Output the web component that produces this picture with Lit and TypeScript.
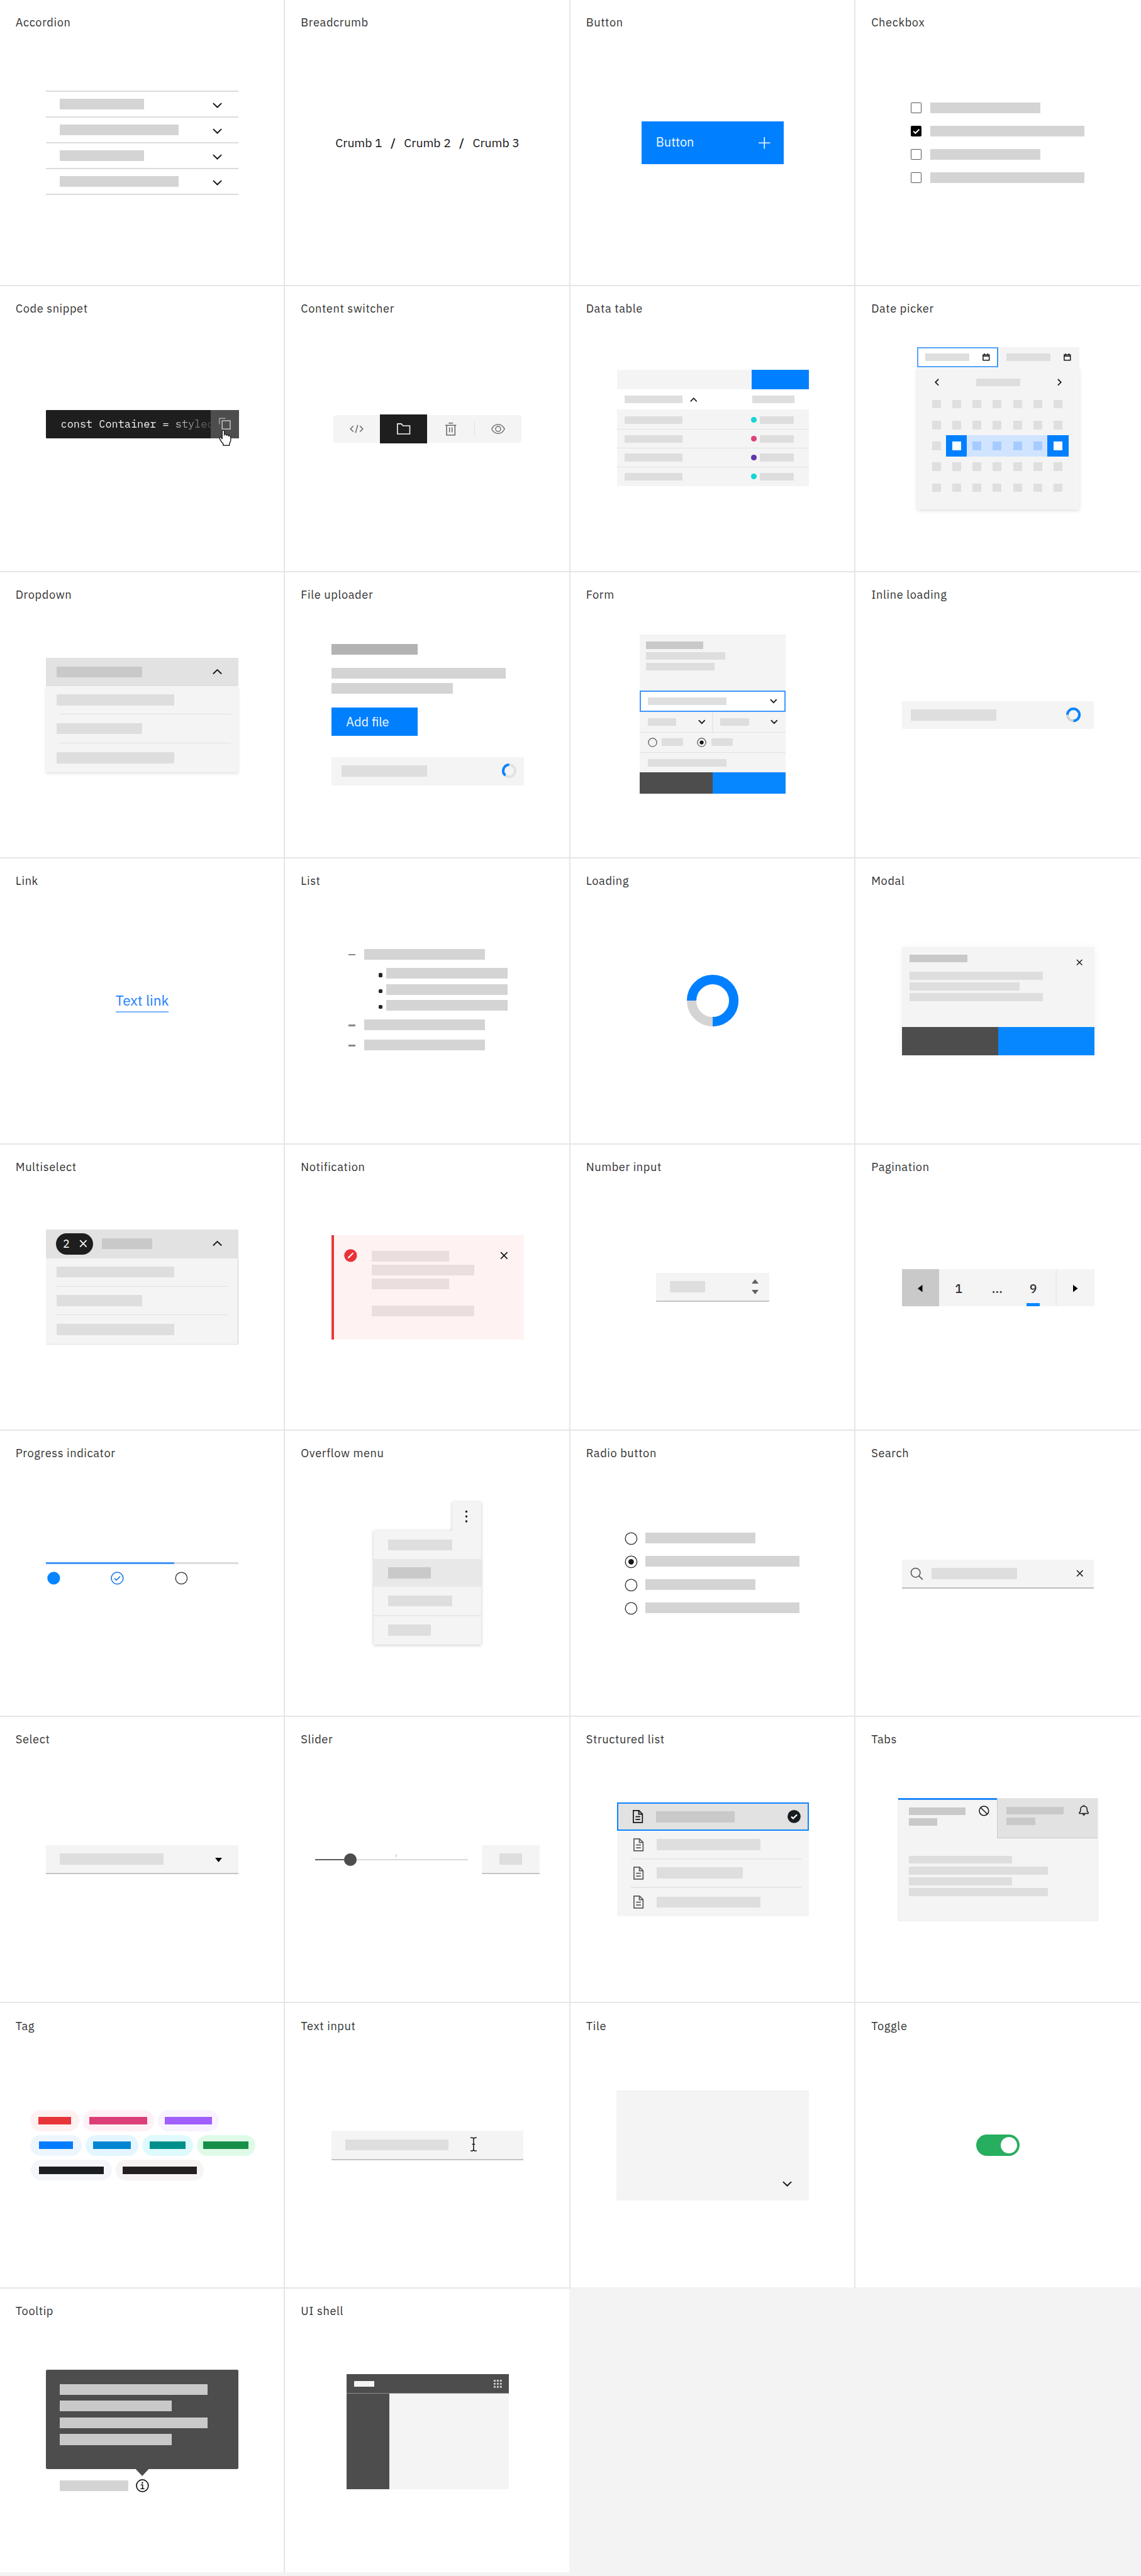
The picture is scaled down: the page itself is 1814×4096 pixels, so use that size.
import { LitElement, html, css, svg, nothing, TemplateResult } from "lit";
import { customElement, property } from "lit/decorators.js";

type View = TemplateResult;

const bar = (w: number, kind = "") => html`<span class="bar ${kind}" style="width:${w}px"></span>`;

/* Icons: [width, height, drawing] */
const ICONS: Record<string, [number, number, unknown]> = {
  down: [26, 15, svg`<path d="M1.5 2 13 13 24.5 2" fill="none" stroke="currentColor" stroke-width="3.4"/>`],
  up: [26, 15, svg`<path d="M1.5 13 13 2 24.5 13" fill="none" stroke="currentColor" stroke-width="3.4"/>`],
  downSmall: [20, 13, svg`<path d="M1.5 2 10 10.5 18.5 2" fill="none" stroke="currentColor" stroke-width="3.2"/>`],
  upSmall: [20, 12, svg`<path d="M1.5 11 10 2 18.5 11" fill="none" stroke="currentColor" stroke-width="2.8"/>`],
  left: [12, 20, svg`<path d="M10.5 1.5 2 10l8.500 8.500" fill="none" stroke="currentColor" stroke-width="3"/>`],
  right: [12, 20, svg`<path d="M1.500 1.500 10 10l-8.500 8.500" fill="none" stroke="currentColor" stroke-width="3"/>`],
  plus: [32, 32, svg`<path d="M16 0v32M0 16h32" fill="none" stroke="currentColor" stroke-width="2.8"/>`],
  close: [22, 22, svg`<path d="M2 2l18 18M20 2 2 20" fill="none" stroke="currentColor" stroke-width="3"/>`],
  check: [20, 16, svg`<path d="M2 8l5.500 5.500L18 3" fill="none" stroke="currentColor" stroke-width="3.600"/>`],
  copy: [32, 34, svg`<path d="M9 8.500h22v23H9z" fill="none" stroke="#c6c6c6" stroke-width="2.600"/><path d="M1.500 18V2H18" fill="none" stroke="#a4a4a4" stroke-width="2.600"/>`],
  hand: [36, 46, svg`<path transform="scale(2.620)" d="M3.400 10V1.700c0-1.500 2.300-1.500 2.300 0v3.700c.5-.9 2.100-.7 2.300.5.600-.7 2.100-.4 2.200.8.700-.5 2.200-.2 2.200 1.100v3.500c0 1.700-1.200 2.600-1.400 3.900v1.500H4.600v-1.500C3.500 13.800 2 12.200.900 9.800.200 8.200 2 7.400 2.700 8.600z" fill="#fff" stroke="#2d2628" stroke-width="1"/>`],
  code: [38, 24, svg`<path d="M10 4 2 12l8 8M28 4l8 8-8 8M22 1l-6 22" fill="none" stroke="currentColor" stroke-width="2.600"/>`],
  folder: [37, 31, svg`<path d="M1.500 29.500v-28h10.500l5 5.500h18.500v22.500z" fill="none" stroke="currentColor" stroke-width="2.800"/>`],
  trash: [30, 36, svg`<path d="M0 7.500h30M3.500 7.500v26.500h23V7.500M9 1.500h12M11.500 13v14M18.500 13v14" fill="none" stroke="currentColor" stroke-width="2.600"/>`],
  eye: [38, 28, svg`<path d="M1.500 14C5 6 11.500 1.500 19 1.500S33 6 36.500 14C33 22 26.500 26.500 19 26.500S5 22 1.500 14z" fill="none" stroke="currentColor" stroke-width="2.200"/><circle cx="19" cy="14" r="7" fill="none" stroke="currentColor" stroke-width="2.400"/>`],
  calendar: [20, 20, svg`<path d="M1.500 4h17v14.500h-17zM1.500 7.500h17M5.500 0v5M14.500 0v5" fill="none" stroke="currentColor" stroke-width="2.600"/>`],
  radio: [36, 36, svg`<circle cx="18" cy="18" r="16" fill="none" stroke="#333" stroke-width="2.400"/>`],
  radioOn: [36, 36, svg`<circle cx="18" cy="18" r="16" fill="none" stroke="#333" stroke-width="2.400"/><circle cx="18" cy="18" r="7.500" fill="#161616"/>`],
  ringQuarter: [142, 142, svg`<g fill="none" stroke-width="26"><circle cx="71" cy="71" r="58" stroke="#d4d4d4"/><path d="M13 71a58 58 0 1 1 58 58" stroke="#0080ff"/></g>`],
  ringSmall: [40, 40, svg`<g fill="none" stroke-width="7"><circle cx="20" cy="20" r="16.500" stroke="#d4d4d4"/><path d="M3.500 20A16.500 16.500 0 1 1 20 36.500" stroke="#0a84ff"/></g>`],
  ringFile: [40, 40, svg`<g fill="none" stroke-width="7"><circle cx="20" cy="20" r="16.500" stroke="#e2e2e2"/><path d="M20 3.500A16.500 16.500 0 0 0 9.500 32.700" stroke="#0a84ff"/></g>`],
  error: [36, 36, svg`<circle cx="18" cy="18" r="17.500" fill="#e93237"/><path d="M11 25 25 11" stroke="#fff" stroke-width="3.600"/>`],
  stepDone: [36, 36, svg`<circle cx="18" cy="18" r="17.500" fill="#0785ff"/>`],
  stepCheck: [36, 36, svg`<circle cx="18" cy="18" r="16.200" fill="none" stroke="#1b76e3" stroke-width="2.800"/><path d="M10.500 18.500l5 5L26 13" fill="none" stroke="#1b76e3" stroke-width="3"/>`],
  search: [36, 36, svg`<circle cx="15" cy="15" r="12.500" fill="none" stroke="currentColor" stroke-width="2.600"/><path d="M24 24l10.500 10" stroke="currentColor" stroke-width="2.800"/>`],
  caretUp: [19, 12, svg`<path d="M9.500 0 19 12H0z" fill="currentColor"/>`],
  caretDown: [19, 12, svg`<path d="M0 0h19L9.500 12z" fill="currentColor"/>`],
  caretLeft: [13, 20, svg`<path d="M13 0v20L0 10z" fill="currentColor"/>`],
  caretRight: [13, 20, svg`<path d="M0 0v20l13-10z" fill="currentColor"/>`],
  dots: [5, 32, svg`<path d="M0 0h5v5H0zM0 13.500h5v5H0zM0 27h5v5H0z" fill="currentColor"/>`],
  ibeam: [17, 40, svg`<path d="M0 1.800h4.500Q8.500 2.500 8.500 6v28q0 3.500-4 4.200H0M17 1.800h-4.500Q8.500 2.500 8.500 6M8.500 34q0 3.500 4 4.200H17M4.500 20h8" fill="none" stroke="currentColor" stroke-width="2.600"/>`],
  file: [28, 36, svg`<path d="M1.500 1.500h15.500L26.500 11v23.500h-25zM16.500 1.500v10h10M7.500 18.500h13M7.500 26h13" fill="none" stroke="currentColor" stroke-width="3"/>`],
  checkFilled: [36, 36, svg`<circle cx="18" cy="18" r="18" fill="#171d20"/><path d="M10.500 18.500l5 4.800L26 13" fill="none" stroke="#fff" stroke-width="4"/>`],
  blocked: [29, 29, svg`<circle cx="14.500" cy="14.500" r="12.800" fill="none" stroke="currentColor" stroke-width="2.600"/><path d="M5.500 5.500l18 18" stroke="currentColor" stroke-width="2.600"/>`],
  bell: [28, 30, svg`<path d="M14 0v4M2 23.500h24v-3l-3-3.500v-5.500C23 6.500 19.500 3.500 14 3.500S5 6.500 5 11.500V17l-3 3.500z" fill="none" stroke="currentColor" stroke-width="2.600"/><path d="M10 25h8q-.5 4-4 4t-4-4z" fill="currentColor"/>`],
  info: [36, 36, svg`<circle cx="18" cy="18" r="16.300" fill="none" stroke="currentColor" stroke-width="3"/><path d="M13.500 15.500H18.500V26M13 26.300h10.500" fill="none" stroke="currentColor" stroke-width="2.800"/><circle cx="18" cy="10" r="2.200" fill="currentColor"/>`],
  grid: [22, 22, svg`<path d="M0 0h5v5H0zM8.500 0h5v5h-5zM17 0h5v5h-5zM0 8.500h5v5H0zM8.500 8.500h5v5h-5zM17 8.500h5v5h-5zM0 17h5v5H0zM8.500 17h5v5h-5zM17 17h5v5h-5z" fill="currentColor"/>`],
};

const icon = (name: string, cls = "") => {
  const [w, h, body] = ICONS[name];
  return html`<svg class="icon ${cls}" width=${w} height=${h} viewBox="0 0 ${w} ${h}" aria-hidden="true">${body}</svg>`;
};

const accordion = (): View => html`<div class="accordion">
  ${[231, 326, 231, 326].map((w) => html`<div class="row">${bar(w)}${icon("down")}</div>`)}
</div>`;

const breadcrumb = (): View => html`<div class="breadcrumb">
  <span>Crumb 1</span><b>/</b><span>Crumb 2</span><b>/</b><span>Crumb 3</span>
</div>`;

const button = (): View => html`<div class="button"><span>Button</span>${icon("plus")}</div>`;

const checkbox = (): View => html`<div class="options checks">
  ${[302, 424, 302, 424].map((w, i) => html`<div class="option">
    <i class="box ${i === 1 ? "on" : ""}">${i === 1 ? icon("check") : nothing}</i>${bar(w)}
  </div>`)}
</div>`;

const codeSnippet = (): View => html`<div class="code">
  <span class="code-text">const Container = styled</span>
  <span class="copy">${icon("copy")}</span>
  ${icon("hand", "hand")}
</div>`;

const switcher = (): View => html`<div class="switcher">
  <span class="seg">${icon("code")}</span>
  <span class="seg on">${icon("folder")}</span>
  <span class="seg">${icon("trash")}</span>
  <span class="seg last">${icon("eye")}</span>
</div>`;

const dataTable = (): View => html`<div class="table">
  <div class="toolbar"><span class="action"></span></div>
  <div class="thead">${bar(159, "sm")}${icon("upSmall")}<span class="col">${bar(117, "sm")}</span></div>
  <div class="tbody">
    ${["teal", "pink", "violet", "teal"].map((c) => html`<div class="tr">${bar(159, "sm")}
      <span class="status"><i class="dot ${c}"></i>${bar(93, "sm")}</span></div>`)}
  </div>
</div>`;

const dayClass = (row: number, col: number) =>
  row !== 2 || col === 0 ? "" : col === 1 || col === 6 ? "edge" : "range";

const datePicker = (): View => html`<div class="picker">
  <div class="inputs">
    <div class="date focus">${bar(121, "sm")}${icon("calendar")}</div>
    <div class="date">${bar(121, "sm")}${icon("calendar")}</div>
  </div>
  <div class="calendar">
    <div class="month">${icon("left")}${bar(122, "sm")}${icon("right")}</div>
    <div class="days">
      ${Array.from({ length: 35 }, (_, i) => html`<span class="day ${dayClass(Math.floor(i / 7), i % 7)}"><i></i></span>`)}
    </div>
  </div>
</div>`;

const dropdown = (): View => html`<div class="dropdown">
  <div class="head">${bar(235, "strong")}${icon("up")}</div>
  <div class="menu">${[323, 235, 323].map((w) => html`<div class="item">${bar(w)}</div>`)}</div>
</div>`;

const fileUploader = (): View => html`<div class="uploader">
  ${bar(236, "title")}
  <div class="lines">${bar(479)}${bar(333)}</div>
  <div class="add">Add file</div>
  <div class="inline file">${bar(235)}${icon("ringFile")}</div>
</div>`;

const form = (): View => html`<div class="form">
  <div class="intro">${bar(157, "sm strong")}${bar(218, "sm")}${bar(189, "sm")}</div>
  <div class="field focus">${bar(216, "sm")}${icon("downSmall")}</div>
  <div class="pair">
    <div class="field">${bar(79, "sm")}${icon("downSmall")}</div>
    <div class="field">${bar(79, "sm")}${icon("downSmall")}</div>
  </div>
  <div class="choices">${icon("radio")}${bar(59, "sm")}${icon("radioOn")}${bar(59, "sm")}</div>
  <div class="note">${bar(216, "sm")}</div>
  <div class="actions"><span class="secondary"></span><span class="primary"></span></div>
</div>`;

const inlineLoading = (): View => html`<div class="inline spin">${bar(235)}${icon("ringSmall")}</div>`;
const link = (): View => html`<div class="link">Text link</div>`;
const sub = () => html`<div class="li"><i class="bullet"></i>${bar(334)}</div>`;
const dash = () => html`<div class="li"><i class="dash"></i>${bar(332)}</div>`;
const list = (): View => html`<div class="list">
  ${dash()}<div class="sub">${sub()}${sub()}${sub()}</div>${dash()}<div class="gap"></div>${dash()}
</div>`;
const loading = (): View => html`<div class="loading">${icon("ringQuarter")}</div>`;

const modal = (): View => html`<div class="modal">
  <div class="body">
    <div class="copy-lines">${bar(158, "sm strong first")}${bar(366, "sm")}${bar(302, "sm")}${bar(366, "sm")}</div>
    ${icon("close")}
  </div>
  <div class="actions"><span class="secondary"></span><span class="primary"></span></div>
</div>`;

const multiselect = (): View => html`<div class="dropdown multi">
  <div class="head"><span class="pill">2 ${icon("close")}</span>${bar(138, "strong")}${icon("up")}</div>
  <div class="menu">${[323, 235, 323].map((w) => html`<div class="item">${bar(w)}</div>`)}</div>
</div>`;

const notification = (): View => html`<div class="notification">
  ${icon("error")}
  <div class="message">${bar(214)}${bar(283)}${bar(214)}${bar(283, "last")}</div>
  ${icon("close")}
</div>`;

const numberInput = (): View => html`<div class="input number">${bar(98)}
  <span class="stepper">${icon("caretUp")}${icon("caretDown")}</span></div>`;

const pagination = (): View => html`<div class="pagination">
  <span class="prev">${icon("caretLeft")}</span>
  <span class="page p1">1</span><span class="page p2">...</span><span class="page current">9</span>
  <span class="next">${icon("caretRight")}</span>
</div>`;

const progress = (): View => html`<div class="progress">
  <div class="step done">${icon("stepDone")}</div>
  <div class="step done">${icon("stepCheck")}</div>
  <div class="step">${icon("radio")}</div>
</div>`;

const overflow = (): View => html`<div class="overflow">
  <span class="trigger">${icon("dots")}</span>
  <div class="sheet">
    <div class="item">${bar(176)}</div>
    <div class="item hover">${bar(117, "strong")}</div>
    <div class="item">${bar(176)}</div>
    <div class="item divided">${bar(117)}</div>
  </div>
</div>`;

const radios = (): View => html`<div class="options radios">
  ${[302, 423, 302, 423].map((w, i) => html`<div class="option">${icon(i === 1 ? "radioOn" : "radio")}${bar(w)}</div>`)}
</div>`;

const search = (): View => html`<div class="input search">${icon("search")}${bar(236)}${icon("close")}</div>`;
const select = (): View => html`<div class="input select">${bar(285)}${icon("caretDown")}</div>`;

const slider = (): View => html`<div class="slider">
  <span class="filled"></span><i class="knob"></i><span class="rest"><i class="tick"></i></span>
  <div class="input value">${bar(61)}</div>
</div>`;

const structured = (): View => html`<div class="structured">
  <div class="srow selected">${icon("file")}${bar(216, "strong")}${icon("checkFilled")}</div>
  ${[284, 236, 284].map((w) => html`<div class="srow">${icon("file")}${bar(w)}</div>`)}
</div>`;

const tabs = (): View => html`<div class="tabs">
  <div class="strip">
    <div class="tab active"><div class="stack">${bar(157, "sm strong")}${bar(79, "sm strong")}</div>${icon("blocked")}</div>
    <div class="tab"><div class="stack">${bar(157, "sm strong")}${bar(79, "sm strong")}</div>${icon("bell")}</div>
  </div>
  <div class="panel">${[284, 383, 284, 383].map((w) => bar(w, "sm"))}</div>
</div>`;

const TAGS: [string, number, number][][] = [
  [["red", 134, 90], ["magenta", 195, 158], ["purple", 169, 129]],
  [["blue", 141, 94], ["cyan", 146, 105], ["mint", 139, 97], ["green", 161, 125]],
  [["cool", 222, 179], ["warm", 242, 203]],
];
const tag = (): View => html`<div class="tags">
  ${TAGS.map((row) => html`<div class="tag-row">
    ${row.map(([c, w, b]) => html`<span class="tag ${c}" style="width:${w}px">${bar(b, "sm")}</span>`)}
  </div>`)}
</div>`;

const textInput = (): View => html`<div class="input text">${bar(284)}${icon("ibeam")}</div>`;
const tile = (): View => html`<div class="tile">${icon("down")}</div>`;
const toggle = (): View => html`<div class="toggle"><i></i></div>`;

const tooltip = (): View => html`<div class="tooltip">
  <div class="bubble">${[406, 307, 406, 307].map((w) => bar(w))}</div>
  <i class="arrow"></i>
  <div class="anchor">${bar(187)}${icon("info")}</div>
</div>`;

const shell = (): View => html`<div class="shell">
  <div class="top"><span class="logo"></span>${icon("grid")}</div>
  <div class="main"><div class="side"></div></div>
</div>`;

const COMPONENTS: [string, () => View][] = [
  ["Accordion", accordion], ["Breadcrumb", breadcrumb], ["Button", button], ["Checkbox", checkbox],
  ["Code snippet", codeSnippet], ["Content switcher", switcher], ["Data table", dataTable], ["Date picker", datePicker],
  ["Dropdown", dropdown], ["File uploader", fileUploader], ["Form", form], ["Inline loading", inlineLoading],
  ["Link", link], ["List", list], ["Loading", loading], ["Modal", modal],
  ["Multiselect", multiselect], ["Notification", notification], ["Number input", numberInput], ["Pagination", pagination],
  ["Progress indicator", progress], ["Overflow menu", overflow], ["Radio button", radios], ["Search", search],
  ["Select", select], ["Slider", slider], ["Structured list", structured], ["Tabs", tabs],
  ["Tag", tag], ["Text input", textInput], ["Tile", tile], ["Toggle", toggle],
  ["Tooltip", tooltip], ["UI shell", shell],
];

@customElement("component-card")
class ComponentCard extends LitElement {
  @property() label = "";
  @property({ attribute: false }) view: () => View = () => html``;

  static styles = css`
    * { box-sizing: border-box; }
    :host { display: grid; box-sizing: border-box; min-width: 0; background: #fff; }
    .label {
      grid-area: 1 / 1; align-self: start; padding: 42px 0 0 42.800px; color: #333;
      font-size: 31.5px; line-height: 40px; letter-spacing: 1.050px;
    }
    .stage { grid-area: 1 / 1; display: grid; place-items: center; place-content: center; padding: 1.500px 0 0 1.200px; color: #161616; }

    .icon { display: block; flex: none; overflow: visible; }
    .bar { display: block; flex: none; height: 30px; background: var(--bar, #d4d4d4); }
    .sm { height: 21px; }
    .strong { background: #c9c9c9; }

    .accordion { width: 528px; border-top: 3.500px solid #dcdcdc; }
    .accordion .row {
      display: flex; align-items: center; justify-content: space-between;
      height: 71.2px; padding: 0 45px 0 38px; border-bottom: 3.500px solid #dcdcdc;
    }
    .accordion .icon { margin-top: 6px; }

    .breadcrumb { display: flex; gap: 23px; font-size: 33.500px; line-height: 44px; }
    .breadcrumb b { font-weight: 500; }

    .button {
      display: flex; align-items: center; justify-content: space-between;
      width: 392px; height: 118px; padding: 0 38px 0 40px; background: #0080ff; color: #f4f8ff; font-size: 34.500px;
    }
    .button span { margin-bottom: 4px; }

    .options { display: grid; }
    .option { display: flex; align-items: center; }
    .checks { width: 477px; gap: 33.700px; margin-right: 1px; }
    .checks .option { gap: 24px; }
    .box { display: grid; place-items: center; width: 29px; height: 30px; border: 2px solid #555; border-radius: 2px; }
    .box.on { background: #000; border-color: #000; color: #fff; border-radius: 3px; }
    .radios { width: 480px; gap: 27.700px; margin-right: 3px; }
    .radios .option { gap: 21px; }
    .radios .bar { margin-bottom: 4px; }

    .code {
      position: relative; display: flex; align-items: center; width: 530px; height: 78px; margin: 0 0 27px 2px;
      padding-left: 40px; background: #1e1e1e; border-radius: 2px; color: #f4f4f4;
      font-family: "IBM Plex Mono", "Liberation Mono", monospace; font-size: 29.200px;
    }
    .code-text {
      width: 424px; white-space: nowrap;
      mask-image: linear-gradient(90deg, #000 0 280px, transparent 440px);
    }
    .copy { display: grid; place-items: center; width: 78px; height: 100%; margin-left: -12px; background: #4d4d4d; z-index: 1; }
    .hand { position: absolute; left: 474px; top: 55px; z-index: 2; }

    .switcher { display: flex; align-items: center; width: 518px; height: 77px; background: #f4f4f4; border-radius: 8px; color: #666; }
    .seg { display: grid; place-items: center; flex: 1; height: 80px; }
    .seg.on { background: #1e1e1e; color: #f4f4f4; }
    .seg.last { height: 40px; border-left: 3px solid #e2e2e2; }

    .table { --bar: #dedede; width: 528px; margin: 0 0 5px 1px; }
    .toolbar { display: flex; justify-content: flex-end; height: 53px; background: #f4f4f4; }
    .toolbar .action { width: 157px; background: #0080ff; }
    .thead { display: flex; align-items: center; height: 55px; padding: 0 22px; }
    .thead .icon { margin-left: 20px; }
    .thead .col { margin-left: 151px; }
    .tbody { background: #f4f4f4; }
    .tr { display: flex; align-items: center; justify-content: space-between; height: 51.500px; padding: 0 42px 0 22px; border-bottom: 2px solid #e2e2e2; }
    .tr:first-child { height: 56px; padding-top: 4px; }
    .tr:last-child { border-bottom: 0; }
    .status { display: flex; align-items: center; gap: 9px; }
    .dot { width: 15px; height: 15px; border-radius: 50%; background: #13d6d6; }
    .dot.pink { background: #df3f7c; }
    .dot.violet { background: #6135ac; }

    .picker { --bar: #dedede; width: 446px; margin-bottom: 3px; }
    .inputs { display: flex; gap: 1px; position: relative; }
    .date { display: flex; align-items: center; justify-content: space-between; flex: 1; height: 56px; padding: 0 22px; background: #f4f4f4; }
    .date.focus { background: #fff; border: 3.500px solid #55a5ff; border-right-color: #3d97fa; padding: 0 20px 0 19px; }
    .calendar { height: 391px; padding: 30px 32px 0 26px; background: #f4f4f4; box-shadow: 0 4px 10px rgba(0, 0, 0, 0.13); }
    .month { display: flex; justify-content: space-between; align-items: center; margin-bottom: 21px; padding: 0 16px 0 24px; }
    .days { display: grid; grid-template-columns: repeat(7, 55.700px); grid-auto-rows: 57.500px; }
    .day { display: grid; place-items: center; }
    .day i { width: 24px; height: 24px; background: #dfdfdf; }
    .day.range { background: #d1e4ff; }
    .day.range i { background: #a6cbff; }
    .day.edge { background: #0080ff; margin: 0 -1px; }
    .day.edge i { background: #fff; }

    .dropdown { --bar: #dedede; width: 528px; }
    .dropdown .head { display: flex; align-items: center; height: 77px; padding: 0 45px 0 29px; background: #e2e2e2; }
    .dropdown .head > .icon { margin-left: auto; }
    .menu { height: 237px; background: #f4f4f4; box-shadow: 0 4px 8px rgba(0, 0, 0, 0.12); }
    .menu .item { display: flex; align-items: center; height: 79px; margin: 0 20px 0 38px; border-bottom: 2px solid #e0e0e0; }
    .menu .item:last-child { border-bottom: 0; }
    .menu .bar { margin-left: -9px; }
    .multi { margin-bottom: 3px; }
    .multi .head { height: 79px; padding-left: 27px; }
    .multi .head > .bar { margin-left: 24px; }
    .multi .menu { box-shadow: none; border-right: 2px solid #cfcfcf; border-bottom: 2px solid #e0e0e0; border-radius: 0 0 0 4px; }
    .multi .item { margin: 0 28px 0 29px; height: 78.500px; }
    .multi .menu .bar { margin-left: 0; }
    .pill {
      display: flex; align-items: center; justify-content: space-between; width: 102px; height: 59px; padding: 0 16px 0 19px;
      border-radius: 30px; background: #1e1e1e; color: #fff; font-size: 31px;
    }

    .uploader { width: 527px; margin-bottom: 3px; }
    .title { background: #b3b3b3; margin-bottom: 36px; }
    .lines { display: grid; gap: 11px; margin-bottom: 38px; }
    .add { width: 236px; height: 78px; padding-left: 40px; margin-bottom: 58px; background: #0080ff; color: #f4f8ff; font-size: 34.500px; line-height: 78px; }
    .inline { --bar: #dedede; display: flex; align-items: center; justify-content: space-between; width: 528px; height: 78px; background: #f4f4f4; }
    .file { padding: 0 19px 0 27px; }
    .spin { height: 75px; padding: 0 37px 0 24px; }

    .form { --bar: #dedede; width: 401px; background: #f4f4f4; margin-bottom: 5px; }
    .intro { display: grid; align-content: start; gap: 8.500px; height: 154px; padding: 19px 17px; }
    .field { display: flex; align-items: center; justify-content: space-between; flex: 1; height: 55px; padding: 0 22px; }
    .field.focus { height: 59px; border: 3.500px solid #3d97ff; background: #fff; padding: 0 19px; }
    .pair { display: flex; border-bottom: 2px solid #e0e0e0; }
    .pair .field { padding-right: 19px; }
    .pair .field + .field { border-left: 4px solid #e9e9e9; padding-right: 22px; padding-left: 19px; }
    .choices { display: flex; align-items: center; height: 56px; padding-left: 22px; border-bottom: 2px solid #e0e0e0; }
    .choices .icon { width: 26px; height: 26px; margin-right: 13px; }
    .choices .icon ~ .icon { margin-left: 38px; }
    .note { display: flex; align-items: center; height: 54px; padding-left: 22px; }
    .actions { display: flex; height: 59px; }
    .actions span { flex: 1; }
    .secondary { background: #4d4d4d; }
    .primary { background: #0787ff; }

    .link { height: 56px; color: #1a7fff; font-size: 39px; line-height: 48px; border-bottom: 4px solid #78b3ff; white-space: nowrap; margin-top: 5px; }

    .list { width: 437px; margin: 0 0 9px 4px; }
    .li { display: flex; align-items: center; }
    .dash { width: 19px; height: 5px; margin: 3px 24px 0 0; background: #888; }
    .sub { display: grid; gap: 14px; padding: 23px 0 23px 82px; }
    .bullet { width: 11px; height: 11px; margin: 9px 10px 0 0; border-radius: 3px; background: #262626; }
    .gap { height: 26px; }
    .loading { margin-bottom: 2px; }

    .modal { --bar: #dedede; width: 529px; box-shadow: 0 2px 22px rgba(0, 0, 0, 0.05); }
    .modal .body { display: flex; justify-content: space-between; height: 220px; padding: 21px 31px 0 22px; background: #f4f4f4; }
    .modal .body .icon { width: 18px; height: 18px; margin-top: 12px; }
    .modal .actions { height: 78px; }
    .copy-lines { display: grid; align-content: start; gap: 8.400px; }
    .first { margin-bottom: 18px; }

    .notification { --bar: #eadedf; display: flex; align-items: flex-start; width: 529px; height: 286px; padding: 37px 43px 0 29px; background: #fff2f2; border-left: 8px solid #e8393d; }
    .notification .icon:last-child { margin: 7px 0 0 auto; }
    .message { display: grid; gap: 9px; margin: 6px 0 0 39px; }
    .message .bar { height: 29px; }
    .message .last { margin-top: 36px; }

    .input { --bar: #dedede; display: flex; align-items: center; width: 528px; height: 80px; background: #f4f4f4; border-bottom: 4px solid #c4c4c4; }
    .number { width: 311px; padding: 0 29px 0 37px; justify-content: space-between; }
    .stepper { display: grid; gap: 18px; color: #606060; }
    .search { padding: 0 28px 0 22px; border-bottom-color: #bcbcbc; margin-top: 3px; }
    .search .bar { margin: 0 auto 0 23px; }
    .search .icon:first-child { color: #555; }
    .search .icon:last-child { width: 20px; height: 20px; }
    .select { padding: 0 44px 0 37px; justify-content: space-between; }
    .select .icon { margin-top: 6px; color: #000; }
    .text { padding-left: 38px; }
    .text .icon { margin: 0 0 3px 60px; }

    .pagination { display: flex; width: 529px; height: 102px; background: #f4f4f4; color: #333; font-size: 34px; font-weight: 500; line-height: 108px; text-align: center; }
    .prev, .next { display: grid; place-items: center; width: 102px; padding-top: 6px; color: #000; background: #c9c9c9; }
    .next { width: 107px; margin-left: auto; background: none; border-left: 4px solid #ebebeb; }
    .page { width: 35px; }
    .p1 { margin-left: 37px; }
    .p2 { margin-left: 71px; }
    .current { margin-left: 64px; border-bottom: 9px solid #0a86ff; }

    .progress { display: grid; grid-template-columns: repeat(3, 1fr); width: 528px; }
    .step { padding: 21px 0 0 2px; border-top: 5.300px solid #dcdcdc; }
    .step.done { border-top-color: #3f95fb; }

    .overflow { --bar: #dedede; display: grid; justify-items: end; width: 295px; margin-bottom: 3px; filter: drop-shadow(0 2px 5px rgba(0, 0, 0, 0.22)); }
    .trigger { display: grid; place-items: center; width: 80px; height: 80px; background: #f4f4f4; }
    .sheet { width: 295px; background: #f4f4f4; }
    .sheet .item { display: flex; align-items: center; height: 77px; padding-left: 40px; }
    .sheet .hover { background: #e8e8e8; }
    .sheet .divided { height: 81px; border-top: 4px solid #e9e9e9; }

    .slider { display: flex; align-items: center; width: 616px; }
    .filled { width: 79px; height: 4px; background: #5a5a5a; }
    .knob { width: 34px; height: 34px; border-radius: 50%; background: #4d4d4d; }
    .rest { display: grid; justify-items: start; width: 306px; height: 4px; background: #dadada; }
    .tick { width: 4px; height: 9px; margin: -14px 0 0 107px; background: #dadada; }
    .value { width: 158px; justify-content: center; margin-left: auto; }

    .structured { --bar: #dedede; width: 528px; background: #f4f4f4; margin: 0 0 2px 1px; }
    .srow { display: flex; align-items: center; height: 78px; margin: 0 20px 0 38px; padding-left: 7px; border-bottom: 3.500px solid #e6e6e6; color: #5c5c5c; }
    .srow .bar { margin: 0 auto 0 37px; }
    .srow:last-child { border-bottom: 0; }
    .selected { height: 78px; margin: 0; padding: 0 19px 0 40px; border: 5px solid #0a84ff; background: #e2e2e2; color: #161616; }

    .tabs { --bar: #dedede; width: 550px; height: 340px; background: #f4f4f4; border: 2px solid #efefef; border-top: 0; }
    .strip { display: flex; height: 111px; }
    .tab { display: flex; justify-content: space-between; align-items: flex-start; width: 277px; padding: 21px 24px 0 25px; background: #e2e2e2; border-left: 3px solid #cbcbcb; border-bottom: 3px solid #cbcbcb; border-top: 2px solid #e8e8e8; }
    .tab.active { width: 271px; padding: 19px 21px 0 28px; background: none; border: 0; border-top: 6px solid #2388fb; }
    .tab .icon { margin-top: -3px; }
    .stack { display: grid; gap: 8.500px; padding-top: 2px; }
    .panel { display: grid; gap: 8.500px; padding: 49px 28px; }

    .tags { display: grid; gap: 10px; width: 618px; margin: 0 0 0 3px; }
    .tag-row { display: flex; gap: 10.500px; }
    .tag-row:last-child { padding-left: 2px; }
    .tag { display: grid; place-items: center; height: 58px; border-radius: 29px; }
    .red { background: #fff1f1; --bar: #e8353a; }
    .magenta { background: #fff0f6; --bar: #dc3f78; }
    .purple { background: #f8f3ff; --bar: #a05fff; }
    .blue { background: #edf5ff; --bar: #007dff; }
    .cyan { background: #e3f6ff; --bar: #0286d1; }
    .mint { background: #dffafc; --bar: #008f8a; }
    .green { background: #dffbe8; --bar: #168f48; }
    .cool { background: #f4f6fb; --bar: #1a1e21; }
    .warm { background: #f8f4f3; --bar: #231f20; }

    .tile { display: grid; place-items: end; width: 528px; height: 302px; padding: 0 46px 39px; background: #f4f4f4; }
    .toggle { display: flex; justify-content: flex-end; align-items: center; width: 118px; height: 59px; padding-right: 7px; border-radius: 30px; background: #27ae5f; }
    .toggle i { width: 45px; height: 45px; border-radius: 50%; background: #fff; }

    .tooltip { width: 528px; margin-top: 2px; }
    .bubble { display: grid; align-content: start; gap: 16px; height: 273px; padding: 39px 38px; background: #4d4d4d; border-radius: 4px; --bar: #c9c9c9; }
    .arrow { display: block; width: 36px; height: 19px; margin: 0 auto; background: #4d4d4d; clip-path: polygon(0 0, 100% 0, 50% 100%); }
    .anchor { display: flex; align-items: center; gap: 21px; margin-top: 9px; padding-left: 38px; }

    .shell { display: flex; flex-direction: column; width: 446px; height: 316px; background: #f4f4f4; margin: 6px 0 0 2px; }
    .top { display: flex; align-items: center; justify-content: space-between; height: 54px; padding: 0 20px 0 21px; background: #4d4d4d; border-bottom: 2px solid #8f8f8f; color: #cfcfcf; }
    .logo { width: 54px; height: 16px; background: #f4f4f4; }
    .main { display: flex; flex: 1; }
    .side { width: 118px; background: #4d4d4d; }
  `;

  render() {
    return html`<div class="label">${this.label}</div><div class="stage">${this.view()}</div>`;
  }
}

@customElement("app-root")
class AppRoot extends LitElement {
  /* One card is 784 units wide; zoom maps four of them onto the page width. */
  static styles = css`
    :host { display: block; height: 4096px; overflow: hidden; background: #f3f3f3; font-family: "IBM Plex Sans", Roboto, "Liberation Sans", sans-serif; }
    .overview { zoom: 0.57844; display: grid; grid-template-columns: repeat(4, 784px); grid-template-rows: repeat(7, 786.670px) 784px 784px; }
    .card { border-right: 3.460px solid #e6e6e6; border-bottom: 3.460px solid #e6e6e6; }
    .card:nth-child(4n) { border-right-color: #fff; }
    .card:nth-child(31), .card:nth-child(32) { border-bottom-color: #f3f3f3; }
    .card:nth-child(33) { border-bottom-color: #f3f3f3; }
    .card:nth-child(34) { border-color: #f3f3f3; }
  `;

  render() {
    return html`<div class="overview">
      ${COMPONENTS.map(([label, view]) => html`<component-card class="card" .label=${label} .view=${view}></component-card>`)}
    </div>`;
  }
}
